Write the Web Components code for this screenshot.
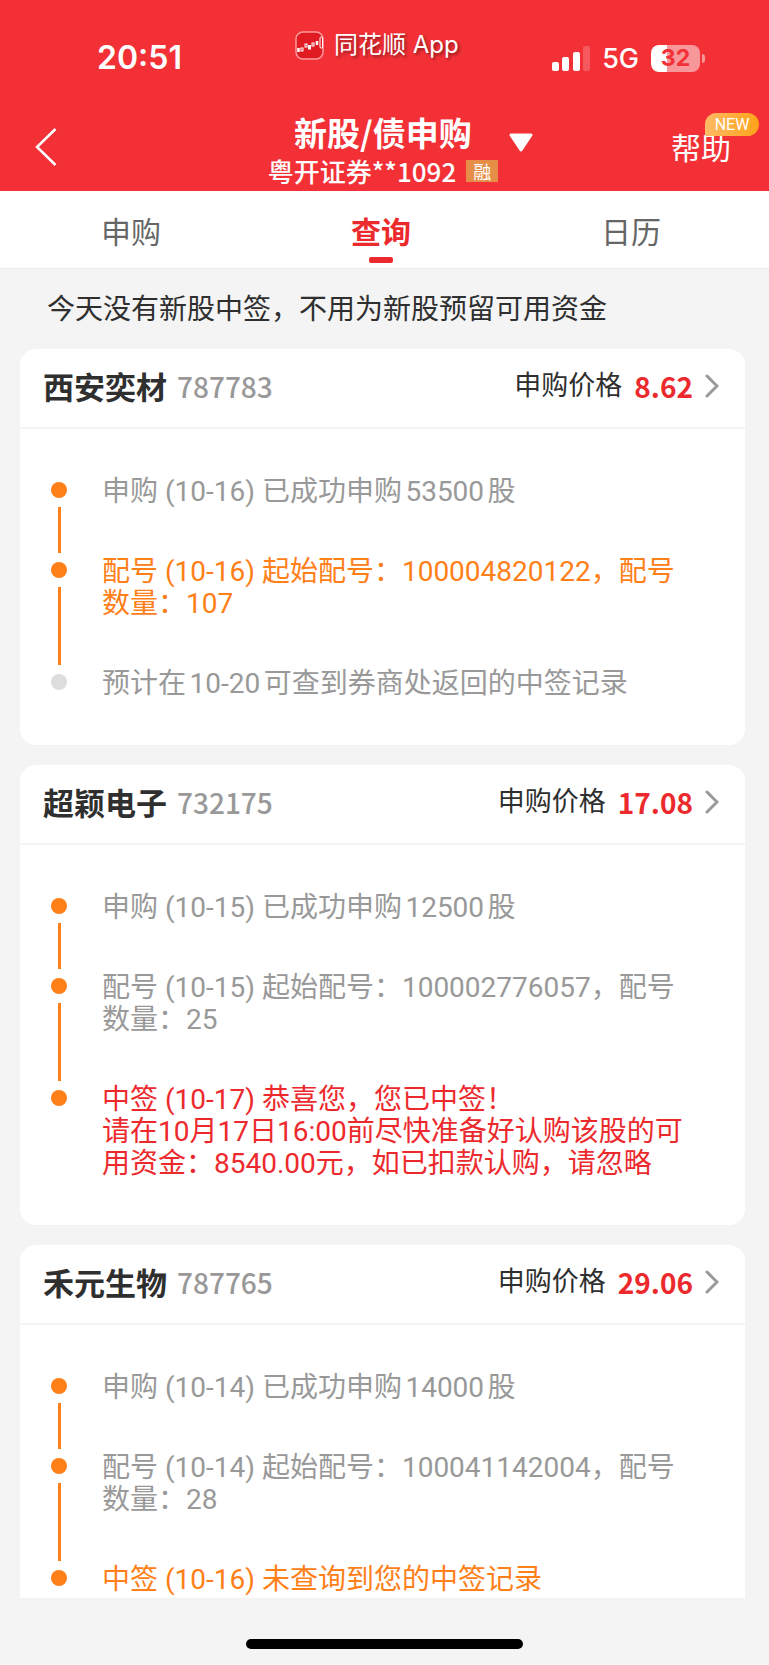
<!DOCTYPE html>
<html lang="zh-CN">
<head>
<meta charset="utf-8">
<meta name="viewport" content="width=device-width, initial-scale=1">
<title>新股/债申购</title>
<style>
  html, body { margin: 0; height: 100%; }
  body {
    font-family: Inter, "Noto Sans CJK SC", sans-serif;
    color: #2f2f2f;
    --brand: #f23036;
    --accent: #ec2a2d;
    --orange: #ff8019;
    --muted: #999;
    --digits: "Noto Sans CJK SC", sans-serif;
  }
</style>
</head>
<body>
<ipo-app>
  <status-bar slot="top" time="20:51" network="5G" battery="32">同花顺 App</status-bar>
  <nav-bar slot="top" heading="新股/债申购" account="粤开证券**1092" tag="融"></nav-bar>
  <tab-strip slot="top" items="申购,查询,日历" current="查询"></tab-strip>
  <notice-line>今天没有新股中签，不用为新股预留可用资金</notice-line>
  <ipo-card name="西安奕材" code="787783" price="8.62">
    <ipo-step>申购 (10-16) 已成功申购53500股</ipo-step>
    <ipo-step tone="orange">配号 (10-16) 起始配号：100004820122，配号数量：107</ipo-step>
    <ipo-step pending last>预计在10-20可查到券商处返回的中签记录</ipo-step>
  </ipo-card>
  <ipo-card name="超颖电子" code="732175" price="17.08">
    <ipo-step>申购 (10-15) 已成功申购12500股</ipo-step>
    <ipo-step>配号 (10-15) 起始配号：100002776057，配号数量：25</ipo-step>
    <ipo-step tone="red" last>中签 (10-17) 恭喜您，您已中签！<br>请在10月17日16:00前尽快准备好认购该股的可用资金：8540.00元，如已扣款认购，请忽略</ipo-step>
  </ipo-card>
  <ipo-card name="禾元生物" code="787765" price="29.06">
    <ipo-step>申购 (10-14) 已成功申购14000股</ipo-step>
    <ipo-step>配号 (10-14) 起始配号：100041142004，配号数量：28</ipo-step>
    <ipo-step tone="orange" last>中签 (10-16) 未查询到您的中签记录</ipo-step>
  </ipo-card>
</ipo-app>

<script>
class Base extends HTMLElement {
  connectedCallback() {
    if (this.shadowRoot) return;
    this.attachShadow({ mode: "open" }).innerHTML = this.view();
  }
  attr(name) { return this.getAttribute(name) || ""; }
}

customElements.define("ipo-app", class extends Base {
  view() {
    return `<style>
      :host { display: flex; flex-direction: column; height: 100vh; background: #f4f4f4; }
      main { flex: 1; min-height: 0; overflow: hidden; padding: 0 24px 0 20px; display: flex; flex-direction: column; gap: 20px; }
      ::slotted(*) { flex: none; }
      footer { flex: none; height: 67px; display: flex; justify-content: center; align-items: flex-end; }
      .home { width: 36%; min-width: 120px; height: 10px; margin-bottom: 16px; border-radius: 5px; background: #000; }
    </style>
    <slot name="top"></slot>
    <main><slot></slot></main>
    <footer><div class="home"></div></footer>`;
  }
});

customElements.define("status-bar", class extends Base {
  view() {
    return `<style>
      :host { display: grid; grid-template-columns: 198px auto 1fr; height: 112px; box-sizing: border-box; padding: 28px 69px 0 97px; background: var(--brand); color: #fff; }
      time { font-size: 32px; line-height: 60px; font-weight: 600; }
      .app { display: flex; align-items: center; gap: 10px; height: 34px; font-size: 24px; line-height: 34px; text-shadow: 2px 2px 3px rgba(0,0,0,.4); }
      .right { display: flex; justify-content: flex-end; align-items: center; gap: 12px; height: 60px; font-size: 27px; font-weight: 500; }
      .battery { position: relative; display: flex; align-items: center; justify-content: center; width: 49px; height: 27px; border-radius: 8px; background: linear-gradient(90deg, #fff 16px, #f8979a 16px); color: var(--brand); font-size: 23px; font-weight: 700; }
      .battery::after { content: ""; position: absolute; right: -5px; top: 9px; width: 3px; height: 9px; border-radius: 0 4px 4px 0; background: #f8979a; }
      svg { display: block; flex: none; }
    </style>
    <time>${this.attr("time")}</time>
    <div class="app">
      <svg width="29" height="29" viewBox="0 0 29 29" fill="none">
        <rect x="1" y="1" width="27" height="27" rx="7" fill="#e01c22" stroke="#fa9a9c" stroke-width="1.5"/>
        <path d="M3.500 17v4" stroke="#fff" stroke-width="2.500"/>
        <rect x="6" y="17" width="2" height="3" stroke="#fff"/>
        <rect x="10" y="13" width="2" height="3" stroke="#fff"/>
        <path d="M14.500 14v4.500" stroke="#fff" stroke-width="3"/>
        <rect x="17" y="12" width="2" height="3" stroke="#fff"/>
        <path d="M22 10v4" stroke="#fff" stroke-width="2.500"/>
        <rect x="25" y="6" width="2.500" height="11" rx="1" stroke="#fff"/>
      </svg>
      <slot></slot>
    </div>
    <div class="right">
      <svg width="38" height="25" viewBox="0 0 38 25" fill="#fff">
        <rect x="0" y="16" width="7" height="9" rx="2"/>
        <rect x="10" y="11" width="7" height="14" rx="2"/>
        <rect x="21" y="6" width="7" height="19" rx="2"/>
        <rect x="31" y="0" width="7" height="25" rx="2" opacity=".2"/>
      </svg>
      <span>${this.attr("network")}</span>
      <span class="battery">${this.attr("battery")}</span>
    </div>`;
  }
});

customElements.define("nav-bar", class extends Base {
  view() {
    return `<style>
      :host { display: grid; grid-template-columns: 1fr auto 1fr; height: 79px; box-sizing: border-box; padding: 0 38px 0 35px; background: var(--brand); color: #fff; }
      button { border: 0; padding: 0; background: none; color: inherit; font: inherit; cursor: pointer; }
      .back { justify-self: start; height: 70px; }
      .mid { position: relative; display: flex; flex-direction: column; align-items: center; }
      h1 { margin: 0; font: 700 33px/40px var(--digits); }
      .acct { display: flex; align-items: center; gap: 10px; font: 500 26px/38px var(--digits); }
      .tag { padding: 0 7px; background: #e68e48; font-size: 18px; font-weight: 400; line-height: 22px; }
      .pick { position: absolute; right: -36px; top: 20px; }
      .help { position: relative; justify-self: end; align-self: start; margin-top: 14px; color: inherit; text-decoration: none; font-size: 30px; line-height: 44px; }
      .new { position: absolute; right: -28px; top: -13px; width: 54px; height: 23px; border-radius: 12px 12px 12px 1px; background: linear-gradient(90deg, #ffba66, #ffa31a); font: 400 16px/23px Roboto, sans-serif; text-align: center; }
      svg { display: block; }
    </style>
    <button class="back" aria-label="返回"><svg width="22" height="40" viewBox="0 0 22 40" fill="none" stroke="#fff" stroke-width="2.500"><path d="M20.500 2 2 20l18.500 18"/></svg></button>
    <div class="mid">
      <h1>${this.attr("heading")}</h1>
      <div class="acct"><span>${this.attr("account")}</span><span class="tag">${this.attr("tag")}</span></div>
      <button class="pick" aria-label="切换账户"><svg width="26" height="22" viewBox="0 0 26 22"><path d="M3 3h20L13 18z" fill="#fff" stroke="#fff" stroke-width="3" stroke-linejoin="round"/></svg></button>
    </div>
    <a class="help" href="#help">帮助<span class="new">NEW</span></a>`;
  }
});

customElements.define("tab-strip", class extends Base {
  view() {
    const current = this.attr("current");
    const tabs = this.attr("items").split(",").map(t =>
      `<button role="tab" aria-selected="${t === current}">${t}</button>`).join("");
    return `<style>
      :host { display: block; background: #fff; border-bottom: 1px solid #e9e9e9; }
      div { display: flex; padding: 0 13px 0 6px; }
      button { position: relative; flex: 1; height: 77px; border: 0; padding: 0; background: none; color: #666; font: 400 30px/44px var(--digits); cursor: pointer; }
      [aria-selected=true] { color: var(--accent); font-weight: 700; }
      [aria-selected=true]::after { content: ""; position: absolute; left: calc(50% - 12px); bottom: 5px; width: 24px; height: 6px; border-radius: 2px; background: var(--accent); }
    </style><div role="tablist">${tabs}</div>`;
  }
});

customElements.define("notice-line", class extends Base {
  view() {
    return `<style>
      :host { display: block; padding: 20px 0 0 27px; font-size: 28px; line-height: 40px; }
    </style><slot></slot>`;
  }
});

customElements.define("ipo-card", class extends Base {
  view() {
    return `<style>
      :host { display: block; background: #fff; border-radius: 16px; }
      header { display: flex; align-items: center; box-sizing: border-box; height: 80px; border-bottom: 2px solid #f5f5f5; padding: 0 26px 4px 23px; }
      h2 { margin: 0 10px 0 0; font: 700 31px/44px var(--digits); }
      .code { flex: 1; color: var(--muted); font: 500 28px/44px var(--digits); }
      a { display: flex; align-items: center; color: inherit; text-decoration: none; font-size: 27px; line-height: 40px; }
      .price { margin: 0 12px; color: var(--accent); font: 700 28px/40px var(--digits); }
      .steps { padding: 47px 50px 45px 31px; }
      svg { display: block; }
    </style>
    <header>
      <h2>${this.attr("name")}</h2><span class="code">${this.attr("code")}</span>
      <a href="#${this.attr("code")}">申购价格<span class="price">${this.attr("price")}</span>
        <svg width="14" height="24" viewBox="0 0 14 24" fill="none" stroke="#999" stroke-width="3" stroke-linecap="round"><path d="M2 2l10 10-10 10"/></svg></a>
    </header>
    <div class="steps"><slot></slot></div>`;
  }
});

customElements.define("ipo-step", class extends Base {
  view() {
    return `<style>
      :host { display: flex; gap: 35px; color: var(--muted); }
      :host([tone=orange]) { color: var(--orange); }
      :host([tone=red]) { color: var(--accent); }
      .rail { display: flex; flex-direction: column; align-items: center; gap: 9px; padding: 6px 0 3px; }
      .dot { flex: none; width: 16px; height: 16px; border-radius: 50%; background: var(--orange); }
      :host([pending]) .dot { background: #ddd; }
      .line { flex: 1; width: 3px; background: var(--orange); }
      .text { flex: 1; padding-bottom: 48px; font: 400 28px/32px Roboto, "Noto Sans CJK SC", sans-serif; text-autospace: normal; }
      :host([tone=red]) .text { text-autospace: no-autospace; }
      :host([last]) .line { display: none; }
      :host([last]) .text { padding-bottom: 0; }
    </style>
    <div class="rail"><i class="dot"></i><i class="line"></i></div>
    <div class="text"><slot></slot></div>`;
  }
});
</script>
</body>
</html>
